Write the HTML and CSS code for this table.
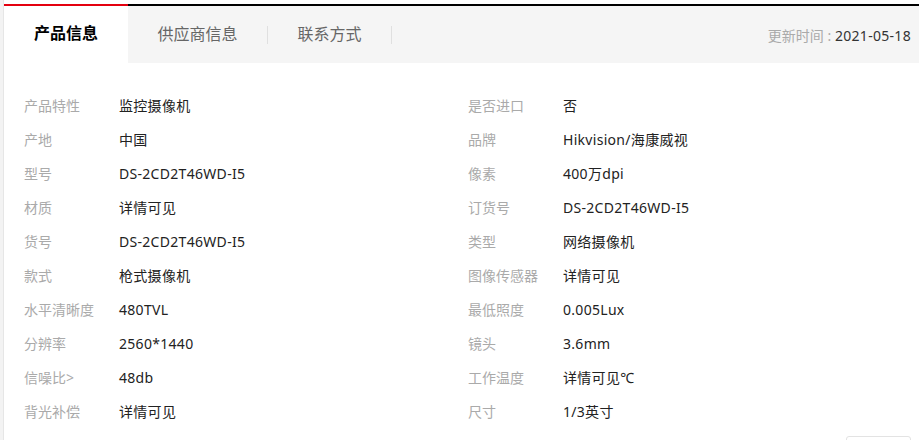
FILE: index.html
```html
<!DOCTYPE html>
<html lang="zh-CN">
<head>
    <meta charset="UTF-8">
    <title>产品信息</title>
    <link rel="stylesheet" href="styles.css">
</head>
<body>
    <div class="page">
        <div class="strip"></div>
        <div class="main">
            <div class="tabbar">
                <div class="tab active">产品信息</div>
                <div class="tab">供应商信息</div>
                <div class="sep"></div>
                <div class="tab">联系方式</div>
                <div class="sep"></div>
                <div class="update">更新时间 : <span class="date">2021-05-18</span></div>
            </div>

            <div class="params">
                <div class="row"><span class="label">产品特性</span><span class="value">监控摄像机</span></div>
                <div class="row"><span class="label">是否进口</span><span class="value">否</span></div>
                <div class="row"><span class="label">产地</span><span class="value">中国</span></div>
                <div class="row"><span class="label">品牌</span><span class="value">Hikvision/海康威视</span></div>
                <div class="row"><span class="label">型号</span><span class="value">DS-2CD2T46WD-I5</span></div>
                <div class="row"><span class="label">像素</span><span class="value">400万dpi</span></div>
                <div class="row"><span class="label">材质</span><span class="value">详情可见</span></div>
                <div class="row"><span class="label">订货号</span><span class="value">DS-2CD2T46WD-I5</span></div>
                <div class="row"><span class="label">货号</span><span class="value">DS-2CD2T46WD-I5</span></div>
                <div class="row"><span class="label">类型</span><span class="value">网络摄像机</span></div>
                <div class="row"><span class="label">款式</span><span class="value">枪式摄像机</span></div>
                <div class="row"><span class="label">图像传感器</span><span class="value">详情可见</span></div>
                <div class="row"><span class="label">水平清晰度</span><span class="value">480TVL</span></div>
                <div class="row"><span class="label">最低照度</span><span class="value">0.005Lux</span></div>
                <div class="row"><span class="label">分辨率</span><span class="value">2560*1440</span></div>
                <div class="row"><span class="label">镜头</span><span class="value">3.6mm</span></div>
                <div class="row"><span class="label">信噪比&gt;</span><span class="value">48db</span></div>
                <div class="row"><span class="label">工作温度</span><span class="value">详情可见℃</span></div>
                <div class="row"><span class="label">背光补偿</span><span class="value">详情可见</span></div>
                <div class="row"><span class="label">尺寸</span><span class="value">1/3英寸</span></div>
            </div>

            <div class="more">
                <div class="more-box"></div>
            </div>
        </div>
    </div>
</body>
</html>
```

FILE: styles.css
```css
body {
    margin: 0;
    font-family: "Noto Sans", "Noto Sans CJK SC", sans-serif;
    font-size: 14px;
    color: #333;
    background-color: #fff;
}
.page {
    display: flex;
    height: 440px;
    overflow: hidden;
}
.strip {
    width: 3px;
    background-color: #f3f3f3;
}
.main {
    flex: 1;
    border-left: 1px solid #e6e6e6;
    padding-top: 4px;
}
.tabbar {
    display: flex;
    align-items: center;
    height: 57px;
    border-top: 2px solid #000;
    background-color: #f5f5f5;
}
.tab {
    padding: 0 29.5px;
    font-size: 16px;
    color: #666;
    line-height: 57px;
}
.tab.active {
    width: 124px;
    box-sizing: border-box;
    padding: 0;
    margin-top: -2px;
    height: 59px;
    text-align: center;
    border-top: 2px solid #e4000f;
    background-color: #fff;
    color: #000;
    font-weight: bold;
    line-height: 55px;
}
.sep {
    width: 1px;
    height: 18px;
    background-color: #e0e0e0;
}
.update {
    margin-left: auto;
    padding-right: 8px;
    color: #aaa;
}
.date {
    color: #333;
    letter-spacing: 0.3px;
}
.params {
    display: grid;
    grid-template-columns: 444px 444px;
    padding: 26px 0 0 20px;
}
.row {
    display: flex;
    line-height: 34px;
    height: 34px;
}
.label {
    width: 95px;
    color: #aaa;
}
.value {
    color: #222;
    letter-spacing: 0.3px;
}
.more {
    display: flex;
    justify-content: flex-end;
    padding: 7px 8px 0 0;
}
.more-box {
    width: 63px;
    height: 30px;
    border: 1px solid #e3e3e3;
    border-radius: 3px;
}
```
